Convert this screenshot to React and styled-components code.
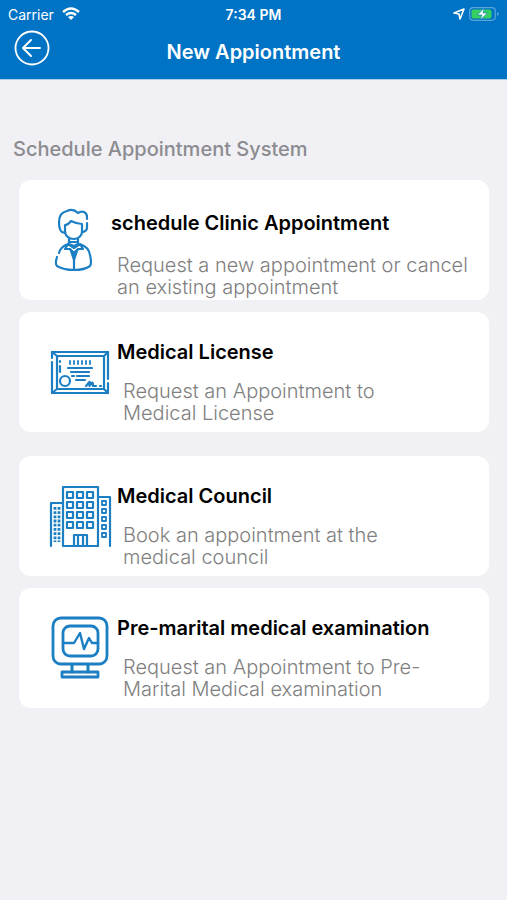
import styled, { createGlobalStyle } from "styled-components";

const GlobalStyle = createGlobalStyle`
  body {
    margin: 0;
    background-color: #f0f0f5;
    font-family: Inter, "Liberation Sans", sans-serif;
  }
  * {
    box-sizing: border-box;
  }
`;

const DoctorIcon = () => (
  <Icon viewBox="0 0 61 64" aria-hidden="true">
    <path d="M12 24C9 22 9 18 9 14C9 8 12 4 17 3C21 1 25 2 28 5C32 2 37 4 37 9V11M37 15V20C37 22 36 23 33 24M12 24L15 25" />
    <path d="M15 25V17C18 17 20 14 21 13C25 15 28 16 32 16V24C32 28 28 31 24 31C19 31 15 28 15 23" />
    <path d="M19 31V36L24 38L28 36V31M19 34H28" />
    <path d="M9 45C10 40 13 38 18 36L15 41H20L24 46L28 41H33L30 36C36 38 39 41 40 47C41 51 42 55 40 58C36 61 30 62 24 62C18 62 12 61 7 58C5 56 6 52 7 49M24 46V62M18 36L24 40L30 36" />
    <path d="M20 41L24 53L28 41L24 44Z" fill="#1c7fc4" strokeWidth="1.4" />
  </Icon>
);

const LicenseIcon = () => (
  <Icon viewBox="0 0 61 64" aria-hidden="true">
    <path d="M2 18V12H58V39M58 43V53H2V22" />
    <path d="M7 16H54V49H7ZM2 12L7 16M58 12L54 16M2 53L7 49M58 53L54 49" />
    <path d="M10 21V22M10 26V32" />
    <path d="M20 21V24M24 21V24M28 21V24M32 21V24M36 21V24M40 21V24" strokeWidth="1.8" />
    <path d="M18 28H42M21 32H39M22 36H24M27 36H39M26 40H35" />
    <circle cx="15" cy="41" r="5" />
    <path d="M36 46C38 44 40 40 40 43C39 46 39 47 41 44C43 41 43 44 43 46H46M50 46H51" />
  </Icon>
);

const CouncilIcon = () => (
  <Icon viewBox="0 0 61 64" aria-hidden="true">
    <path d="M1 62V19H13M13 62V3H48V62H13M48 13H60V62" />
    {[8, 18, 28, 38].map((y) =>
      [17, 27, 37].map((x) => <rect key={`${x}-${y}`} x={x} y={y} width="6" height="6" />)
    )}
    {[17, 25, 33, 41, 49].map((y) => (
      <rect key={y} x="52" y={y} width="4" height="4" strokeWidth="1.8" />
    ))}
    <path d="M5 23V58M9 23V58" strokeWidth="2.8" strokeDasharray="2.8 1.4" strokeLinecap="butt" />
    <path d="M24 62V51H37V62M28 51V62M33 51V62" />
  </Icon>
);

const MonitorIcon = () => (
  <Icon viewBox="0 0 61 64" aria-hidden="true">
    <rect x="3" y="2" width="54" height="46" rx="8" strokeWidth="2.8" />
    <rect x="13" y="10" width="35" height="30" rx="7" strokeWidth="2.8" />
    <path d="M13 27H24L30 17L34 33L39 22L42 27H48" strokeWidth="2.4" />
    <path d="M22 49V56M38 49V56" strokeWidth="3" />
    <rect x="12" y="56" width="36" height="5" strokeWidth="2.8" />
  </Icon>
);

const groups = [
  [
    {
      title: "schedule Clinic Appointment",
      text: "Request a new appointment or cancel an existing appointment",
      icon: DoctorIcon,
      roomy: true,
    },
    {
      title: "Medical License",
      text: "Request an Appointment to Medical License",
      icon: LicenseIcon,
    },
  ],
  [
    {
      title: "Medical Council",
      text: "Book an appointment at the medical council",
      icon: CouncilIcon,
    },
    {
      title: "Pre-marital medical examination",
      text: "Request an Appointment to Pre-Marital Medical examination",
      icon: MonitorIcon,
    },
  ],
];

function App() {
  return (
    <>
      <GlobalStyle />
      <Header>
        <StatusBar>
          <Carrier>
            Carrier
            <svg width="18" height="14" viewBox="0 0 18 14" aria-hidden="true">
              <g fill="none" stroke="#fff" strokeWidth="2.4">
                <path d="M1 5Q9 -2 17 5" />
                <path d="M4 8Q9 4 14 8" />
              </g>
              <path d="M6 10Q9 8 12 10L9 13Z" fill="#fff" />
            </svg>
          </Carrier>
          <Time>7:34 PM</Time>
          <Indicators>
            <svg width="12" height="12" viewBox="0 0 12 12" aria-hidden="true">
              <path d="M1 5L11 1L7 11L6 6Z" fill="none" stroke="#fff" strokeWidth="1.6" strokeLinejoin="round" />
            </svg>
            <svg width="30" height="14" viewBox="0 0 30 14" aria-hidden="true">
              <rect x="0.7" y="0.7" width="25.6" height="12.6" rx="3.5" fill="none" stroke="#5aa5dc" strokeWidth="1.2" />
              <rect x="2.5" y="2.5" width="20" height="9" rx="2" fill="#35d060" />
              <path d="M28 5V9Q30 8 30 7T28 5Z" fill="#5aa5dc" />
              <path d="M15 1L8.5 8H13L11 13L18.5 6H14Z" fill="#fff" stroke="#0874c4" strokeWidth="0.6" />
            </svg>
          </Indicators>
        </StatusBar>
        <NavBar>
          <BackButton type="button" aria-label="Back">
            <svg width="36" height="36" viewBox="0 0 36 36" aria-hidden="true">
              <g fill="none" stroke="#fff" strokeWidth="2" strokeLinecap="round" strokeLinejoin="round">
                <circle cx="18" cy="18" r="16.5" strokeWidth="1.8" />
                <path d="M26 18H10M17 10L9 18L17 26" />
              </g>
            </svg>
          </BackButton>
          <PageTitle>New Appiontment</PageTitle>
        </NavBar>
      </Header>
      <Main>
        <Heading>Schedule Appointment System</Heading>
        <Groups>
          {groups.map((items, i) => (
            <Group key={i}>
              {items.map(({ title, text, icon: CardIcon, roomy }) => (
                <Card key={title} href="#" $roomy={roomy}>
                  <CardIcon />
                  <CardBody $roomy={roomy}>
                    <CardTitle>{title}</CardTitle>
                    <CardText $roomy={roomy}>{text}</CardText>
                  </CardBody>
                </Card>
              ))}
            </Group>
          ))}
        </Groups>
      </Main>
    </>
  );
}

const Header = styled.header`
  color: #fff;
  background-color: #0073c4;
  border-bottom: 1px solid #a5cfeb;
`;
const StatusBar = styled.div`
  display: grid;
  grid-template-columns: 1fr auto 1fr;
  align-items: center;
  height: 28px;
  padding: 0 8px;
  font-size: 14px;
`;
const Carrier = styled.div`
  display: flex;
  align-items: center;
  gap: 8px;
`;
const Time = styled.div`
  font-weight: 600;
`;
const Indicators = styled.div`
  display: flex;
  align-items: center;
  justify-content: flex-end;
  gap: 4px;
`;
const NavBar = styled.div`
  display: grid;
  grid-template-columns: 1fr auto 1fr;
  height: 51px;
  padding: 2px 14px 0;
`;
const BackButton = styled.button`
  justify-self: start;
  align-self: start;
  display: flex;
  padding: 0;
  border: none;
  background: none;
  cursor: pointer;
`;
const PageTitle = styled.h1`
  margin: 0;
  padding-top: 8px;
  font-size: 20px;
  line-height: 28px;
  font-weight: 600;
`;
const Main = styled.main`
  padding: 57px 18px 24px 19px;
`;
const Heading = styled.h2`
  margin: 0 0 19px -6px;
  font-size: 20px;
  line-height: 24px;
  font-weight: 500;
  color: #8c8c90;
`;
const Groups = styled.div`
  display: flex;
  flex-direction: column;
  gap: 24px;
`;
const Group = styled.section`
  display: flex;
  flex-direction: column;
  gap: 12px;
`;
const Card = styled.a`
  display: flex;
  align-items: center;
  gap: ${(props) => (props.$roomy ? 0 : 6)}px;
  min-height: 120px;
  padding-left: 31px;
  border-radius: 12px;
  background-color: #fff;
  color: #000;
  text-decoration: none;
`;
const Icon = styled.svg`
  flex: none;
  width: 61px;
  height: 64px;
  overflow: visible;
  fill: none;
  stroke: #1c7fc4;
  stroke-width: 2.2;
  stroke-linecap: round;
  stroke-linejoin: round;
`;
const CardBody = styled.div`
  flex: 1;
  align-self: flex-start;
  padding-top: ${(props) => (props.$roomy ? 31 : 28)}px;
`;
const CardTitle = styled.h3`
  margin: 0;
  font-size: 20px;
  line-height: 24px;
  font-weight: 600;
`;
const CardText = styled.p`
  margin: ${(props) => (props.$roomy ? 19 : 16)}px ${(props) => (props.$roomy ? 8 : 48)}px 0 6px;
  font-size: 20px;
  line-height: 22px;
  font-weight: 300;
  color: #808080;
`;

export default App;
